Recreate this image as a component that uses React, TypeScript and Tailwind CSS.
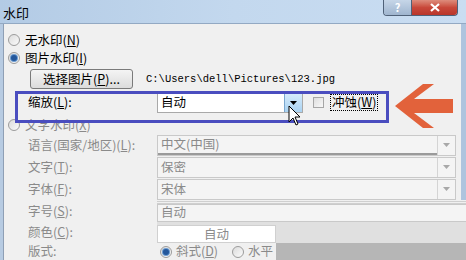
import React from 'react';

// 快捷键 (X) 形式
function Key({ k }: { k: string }) {
  return (
    <span>
      (<span className="underline underline-offset-1">{k}</span>)
    </span>
  );
}

function Radio({ checked }: { checked?: boolean }) {
  return (
    <span className="w-[12px] h-[12px] shrink-0 rounded-full border border-[#9c9c9c] bg-linear-to-br from-[#dcdcdc] to-[#fbfbfb] flex items-center justify-center">
      {checked && <span className="w-[6px] h-[6px] rounded-full bg-[#24579b] shadow-[0_0_0_1px_#6a9ad0]" />}
    </span>
  );
}

function DropBtn({ active }: { active?: boolean }) {
  return (
    <span
      className={`w-[18px] h-full shrink-0 flex items-center justify-center border-l ${
        active ? 'bg-linear-to-b from-[#d8ecfb] to-[#a9d2f2] border-[#7aa7cf]' : 'bg-[#f4f4f4] border-[#d4d4d4]'
      }`}
    >
      <svg width="7" height="4" viewBox="0 0 7 4">
        <path d="M0 0h7L3.5 4z" fill={active ? '#000' : '#a8a8a8'} />
      </svg>
    </span>
  );
}

function Combo({ value, dropdown = true, underline }: { value: string; dropdown?: boolean; underline?: boolean }) {
  return (
    <div className="flex h-[21px] w-full border border-[#c9c9c9] bg-[#f4f4f4]">
      <span className={`flex-1 pl-[3px] flex items-center text-[#8a8a8a] ${underline ? 'border-b-2 border-[#9a9a9a]' : ''}`}>{value}</span>
      {dropdown && <DropBtn />}
    </div>
  );
}

function Row({ label, children }: { label: React.ReactNode; children: React.ReactNode }) {
  return (
    <div className="flex items-center h-[22px]">
      <span className="w-[153px] pl-[24px] text-[#8a8a8a] shrink-0">{label}</span>
      <div className="flex-1">{children}</div>
    </div>
  );
}

export default function App() {
  return (
    <div className="w-[466px] h-[260px] overflow-hidden relative bg-[#f0f0f0] text-[12.5px] leading-none text-black font-['Noto_Sans_CJK_SC','Noto_Sans',sans-serif]">
      {/* 标题栏 */}
      <div className="h-[24px] flex items-start justify-between bg-linear-to-r from-[#b3cbe5] via-[#c3d8ee] to-[#c9ddf2] border-b border-[#93a9c3]">
        <span className="pl-[3px] pt-[6px] text-[13px]">水印</span>
        <div className="flex mr-[8px] h-[16px] rounded-b-[4px] border border-t-0 border-[#4f6178] overflow-hidden">
          <span className="w-[28px] flex items-center justify-center bg-linear-to-b from-[#c6d6e8] to-[#9fb5cf] text-white font-bold text-[11px] border-r border-[#4f6178]">?</span>
          <span className="w-[45px] flex items-center justify-center bg-linear-to-b from-[#dd8c7c] via-[#c8483a] to-[#b9352a]">
            <svg width="10" height="9" viewBox="0 0 10 9">
              <path d="M1 1l8 7M9 1L1 8" stroke="#fff" strokeWidth="2.2" />
            </svg>
          </span>
        </div>
      </div>

      <div className="flex h-[236px]">
        <div className="w-[4px] shrink-0 bg-[#b7cbe2] border-r border-[#8e9fb5]" />
        <div className="flex-1 flex flex-col">
          <div className="border-r-[5px] border-[#aec4de] pt-[7px] pr-[5px]">
            <div className="flex items-center gap-[5px] h-[18px] pl-[4px]">
              <Radio />
              <span>无水印<Key k="N" /></span>
            </div>
            <div className="flex items-center gap-[5px] h-[18px] pl-[4px]">
              <Radio checked />
              <span>图片水印<Key k="I" /></span>
            </div>
            <div className="flex items-center mt-[2px] h-[20px] pl-[26px]">
              <span className="h-[20px] w-[103px] flex items-center justify-center rounded-[3px] border border-[#7a7a7a] bg-linear-to-b from-[#f4f4f4] to-[#dcdcdc]">
                选择图片<Key k="P" />...
              </span>
              <span className="ml-[13px] font-['Liberation_Mono',monospace] text-[10.5px]">C:\Users\dell\Pictures\123.jpg</span>
            </div>
            <div className="flex items-center mt-[3px] h-[21px]">
              <span className="w-[153px] pl-[24px] shrink-0">缩放<Key k="L" />:</span>
              <div className="flex w-[146px] h-[21px] border border-[#a9a9a9] bg-white">
                <span className="flex-1 pl-[3px] flex items-center">自动</span>
                <DropBtn active />
              </div>
              <span className="ml-[10px] w-[11px] h-[11px] border border-[#a6a6a6] bg-linear-to-br from-[#dedede] to-[#f8f8f8]" />
              <span className="ml-[6px] px-[1px] py-[1px] border border-dotted border-black">冲蚀<Key k="W" /></span>
            </div>
            <div className="flex items-center gap-[5px] h-[18px] mt-[3px] pl-[4px]">
              <Radio />
              <span className="text-[#8a8a8a]">文字水印<Key k="X" /></span>
            </div>
            <Row label={<>语言(国家/地区)<Key k="L" />:</>}>
              <Combo value="中文(中国)" underline />
            </Row>
            <Row label={<>文字<Key k="T" />:</>}>
              <Combo value="保密" />
            </Row>
            <Row label={<>字体<Key k="F" />:</>}>
              <Combo value="宋体" />
            </Row>
          </div>
          <div className="flex items-center h-[22px]">
            <span className="w-[153px] pl-[24px] text-[#8a8a8a] shrink-0">字号<Key k="S" />:</span>
            <div className="flex-1 h-[21px] border-t-[3px] border-double border-[#cfcfcf]">
              <div className="h-full border border-r-0 border-[#c9c9c9] bg-[#f4f4f4] flex items-center pl-[3px] text-[#8a8a8a]">自动</div>
            </div>
          </div>
          <div className="flex h-[21px]">
            <span className="w-[153px] pl-[24px] text-[#8a8a8a] shrink-0 flex items-center">颜色<Key k="C" />:</span>
            <div className="flex-1 flex items-end bg-[#e0e0e0]">
              <span className="w-[119px] h-[18px] bg-white border border-[#d0d0d0] flex items-center justify-center text-[#8a8a8a]">自动</span>
            </div>
          </div>
          <div className="flex flex-1">
            <span className="w-[153px] pl-[24px] text-[#8a8a8a] shrink-0 flex items-center">版式:</span>
            <div className="flex items-center gap-[4px] w-[119px] pl-[3px] bg-[#f0f0f0] text-[#8a8a8a]">
              <Radio checked />
              <span>斜式<Key k="D" /></span>
              <span className="ml-[10px]"><Radio /></span>
              <span>水平</span>
            </div>
            <div className="flex-1 bg-[#b6b6b6]" />
          </div>
        </div>
      </div>

      {/* 标注：蓝框、箭头、鼠标 */}
      <div className="absolute left-[15px] top-[91px] w-[374px] h-[32px] border-[3px] border-[#4a4dbf] pointer-events-none" />
      <svg className="absolute left-0 top-0 pointer-events-none" width="466" height="260">
        <polygon points="395,106 423,84 434,84 414,99 453,99 453,113 414,113 434,128 423,128" fill="#e2623b" />
        <path d="M289 106v16l4-4 3 7 2-1-3-7h5z" fill="#fff" stroke="#000" strokeWidth="1" strokeLinejoin="round" />
      </svg>
    </div>
  );
}
